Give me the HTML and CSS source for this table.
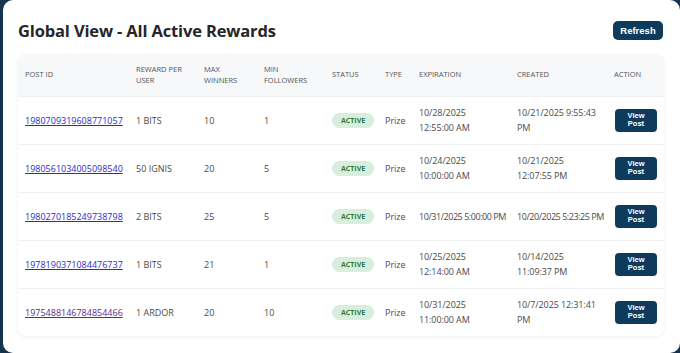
FILE: index.html
```html
<!DOCTYPE html>
<html>
<head>
<meta charset="utf-8">
<title>Global View - All Active Rewards</title>
<link rel="stylesheet" href="styles.css">
</head>
<body>
<div class="card">
    <div class="top">
        <h1>Global View - All Active Rewards</h1>
        <button class="btn refresh">Refresh</button>
    </div>

    <div class="table-wrap">
        <table class="rewards">
            <colgroup>
                <col style="width:111px">
                <col style="width:68px">
                <col style="width:60px">
                <col style="width:68px">
                <col style="width:53px">
                <col style="width:34px">
                <col style="width:98px">
                <col style="width:97px">
                <col style="width:57px">
            </colgroup>
            <thead>
                <tr>
                    <th>Post ID</th>
                    <th>Reward per user</th>
                    <th>Max winners</th>
                    <th>Min followers</th>
                    <th>Status</th>
                    <th>Type</th>
                    <th>Expiration</th>
                    <th>Created</th>
                    <th>Action</th>
                </tr>
            </thead>
            <tbody>
                <tr>
                    <td><a href="#">1980709319608771057</a></td>
                    <td>1 BITS</td>
                    <td>10</td>
                    <td>1</td>
                    <td><span class="badge">ACTIVE</span></td>
                    <td>Prize</td>
                    <td class="date">10/28/2025<br>12:55:00 AM</td>
                    <td class="date">10/21/2025 9:55:43<br>PM</td>
                    <td><button class="btn view">View<br>Post</button></td>
                </tr>
                <tr>
                    <td><a href="#">1980561034005098540</a></td>
                    <td>50 IGNIS</td>
                    <td>20</td>
                    <td>5</td>
                    <td><span class="badge">ACTIVE</span></td>
                    <td>Prize</td>
                    <td class="date">10/24/2025<br>10:00:00 AM</td>
                    <td class="date">10/21/2025<br>12:07:55 PM</td>
                    <td><button class="btn view">View<br>Post</button></td>
                </tr>
                <tr>
                    <td><a href="#">1980270185249738798</a></td>
                    <td>2 BITS</td>
                    <td>25</td>
                    <td>5</td>
                    <td><span class="badge">ACTIVE</span></td>
                    <td>Prize</td>
                    <td class="date compact">10/31/2025 5:00:00 PM</td>
                    <td class="date compact">10/20/2025 5:23:25 PM</td>
                    <td><button class="btn view">View<br>Post</button></td>
                </tr>
                <tr>
                    <td><a href="#">1978190371084476737</a></td>
                    <td>1 BITS</td>
                    <td>21</td>
                    <td>1</td>
                    <td><span class="badge">ACTIVE</span></td>
                    <td>Prize</td>
                    <td class="date">10/25/2025<br>12:14:00 AM</td>
                    <td class="date">10/14/2025<br>11:09:37 PM</td>
                    <td><button class="btn view">View<br>Post</button></td>
                </tr>
                <tr>
                    <td><a href="#" class="visited">1975488146784854466</a></td>
                    <td>1 ARDOR</td>
                    <td>20</td>
                    <td>10</td>
                    <td><span class="badge">ACTIVE</span></td>
                    <td>Prize</td>
                    <td class="date">10/31/2025<br>11:00:00 AM</td>
                    <td class="date">10/7/2025 12:31:41<br>PM</td>
                    <td><button class="btn view">View<br>Post</button></td>
                </tr>
            </tbody>
        </table>
    </div>
</div>
</body>
</html>
```

FILE: styles.css
```css
* {
	box-sizing: border-box;
}

html, body {
	margin: 0;
	padding: 0;
	height: 100%;
}

body {
	background: #16344f;
	font-family: "Open Sans", "Noto Sans", sans-serif;
	color: #444;
	overflow: hidden;
}

.card {
	margin-left: 3px;
	height: 353px;
	background: #fff;
	border-radius: 10px;
	padding: 18px 16px 0 15px;
}

.top {
	display: flex;
	align-items: center;
	justify-content: space-between;
	height: 24px;
	margin-bottom: 12px;
}

.top h1 {
	margin: 0;
	font-size: 16.5px;
	font-weight: 700;
	color: #262626;
	letter-spacing: -0.15px;
}

.btn {
	border: 0;
	background: #0e3a5c;
	color: #fff;
	font-family: "Liberation Sans", Arial, sans-serif;
	font-weight: bold;
	cursor: pointer;
}

.refresh {
	width: 50px;
	height: 19px;
	border-radius: 5px;
	font-size: 9.5px;
	padding: 0;
	margin-right: 1px;
}

.table-wrap {
	width: 646px;
	border-radius: 8px;
	background: #fff;
	box-shadow: 0 1px 4px rgba(0,0,0,.07);
	overflow: hidden;
}

.rewards {
	width: 100%;
	table-layout: fixed;
	border-collapse: collapse;
}

.rewards th {
	background: #f7f8fa;
	height: 42px;
	padding: 0 7px;
	text-align: left;
	font-size: 7.5px;
	font-weight: 500;
	line-height: 11px;
	color: #555;
	text-transform: uppercase;
	border-bottom: 1px solid #eef0f2;
}

.rewards td {
	height: 48px;
	padding: 0 7px;
	font-size: 9px;
	line-height: 15px;
	color: #4a4a4a;
	border-bottom: 1px solid #f0f1f3;
	vertical-align: middle;
}

.rewards td.date {
	white-space: nowrap;
	letter-spacing: -0.1px;
}

.rewards td.compact {
	letter-spacing: -0.45px;
}

.rewards tr:last-child td {
	border-bottom: 0;
}

.rewards a {
	color: #2a2ad0;
}

.rewards a.visited {
	color: #5b2a8c;
}

.badge {
	display: inline-block;
	background: #d7eedd;
	color: #2f7a4a;
	font-size: 7px;
	font-weight: 700;
	line-height: 9px;
	padding: 3px 9px;
	border-radius: 8px;
}

.view {
	width: 42px;
	height: 23px;
	border-radius: 4px;
	font-size: 7.5px;
	line-height: 8px;
	padding: 0;
	margin-left: 1px;
}
```
